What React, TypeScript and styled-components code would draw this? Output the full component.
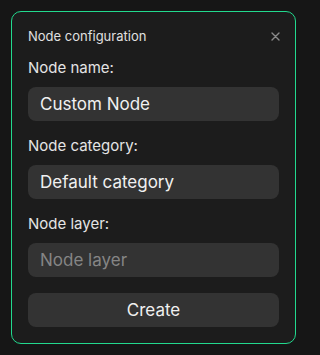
import React from 'react'
import styled, { createGlobalStyle } from 'styled-components'

const GlobalStyle = createGlobalStyle`
  html, body {
    margin: 0;
    background: #161616;
    font-family: Inter, "Noto Sans", sans-serif;
  }
  * {
    box-sizing: border-box;
  }
`;

interface FieldProps {
  label: string;
  value?: string;
  placeholder?: string;
}

const Field = ({ label, value, placeholder }: FieldProps) => (
  <FieldGroup>
    <Label>{label}</Label>
    <Input defaultValue={value} placeholder={placeholder} readOnly />
  </FieldGroup>
)

export default function App() {
  return (
    <>
      <GlobalStyle />
      <Page>
        <Card>
          <Header>
            <Title>Node configuration</Title>
            <Close aria-label="close">
              <svg width="9" height="9" viewBox="0 0 9 9">
                <path d="M1 1 L8 8 M8 1 L1 8" stroke="#8a8a8a" strokeWidth="1.4" strokeLinecap="round" />
              </svg>
            </Close>
          </Header>
          <Fields>
            <Field label="Node name:" value="Custom Node" />
            <Field label="Node category:" value="Default category" />
            <Field label="Node layer:" placeholder="Node layer" />
          </Fields>
          <CreateButton>Create</CreateButton>
        </Card>
      </Page>
    </>
  )
}

const Page = styled.div`
  width: 306px;
  padding: 11px 10px 11px 11px;
`;

const Card = styled.div`
  display: flex;
  flex-direction: column;
  width: 285px;
  height: 333px;
  padding: 16px 16px 15px;
  background: #1c1c1c;
  border: 1px solid #22d98e;
  border-radius: 10px;
`;

const Header = styled.div`
  display: flex;
  align-items: center;
  justify-content: space-between;
  height: 16px;
`;

const Title = styled.span`
  font-size: 13px;
  color: #e0e0e0;
`;

const Close = styled.button`
  display: flex;
  align-items: center;
  justify-content: center;
  width: 9px;
  height: 16px;
  margin-right: -1px;
  padding: 0;
  border: none;
  background: none;
`;

const Fields = styled.div`
  display: flex;
  flex-direction: column;
  gap: 15px;
  margin-top: 14px;
`;

const FieldGroup = styled.div`
  display: flex;
  flex-direction: column;
  gap: 9px;
`;

const Label = styled.label`
  font-size: 15px;
  line-height: 20px;
  color: #e4e4e4;
`;

const Input = styled.input`
  width: 100%;
  height: 34px;
  padding: 0 12px;
  border: none;
  border-radius: 8px;
  background: #333333;
  color: #f0f0f0;
  font-family: inherit;
  font-size: 17px;
  outline: none;
  &::placeholder {
    color: #858585;
  }
`;

const CreateButton = styled.button`
  width: 100%;
  height: 34px;
  margin-top: 16px;
  border: none;
  border-radius: 8px;
  background: #333333;
  color: #f0f0f0;
  font-family: inherit;
  font-size: 17px;
`;
